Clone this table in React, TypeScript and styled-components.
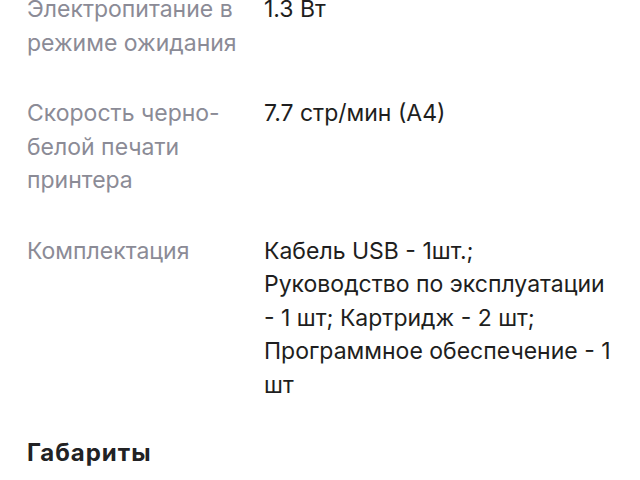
import React from "react";
import styled, { createGlobalStyle } from "styled-components";

const Global = createGlobalStyle`
  html, body { margin: 0; padding: 0; background: #ffffff; }
  body { font-family: Inter, "Noto Sans", "Liberation Sans", sans-serif; overflow: hidden; }
`;

const Page = styled.div`
  width: 640px;
  height: 480px;
  overflow: hidden;
  background: #ffffff;
`;

const Content = styled.div`
  display: flex;
  flex-direction: column;
  padding: 0 24px 0 27px;
  margin-top: -7px;
`;

const SpecList = styled.dl`
  display: flex;
  flex-direction: column;
  gap: 37px;
  margin: 0;
`;

const SpecRow = styled.div`
  display: grid;
  grid-template-columns: 215px 1fr;
  column-gap: 22px;
  font-size: 23px;
  line-height: 33.5px;
`;

const Label = styled.dt`
  margin: 0;
  color: #8b8b96;
`;

const Value = styled.dd`
  margin: 0;
  color: #1e1e20;
  white-space: pre-line;
`;

const SectionTitle = styled.h2`
  margin: 34px 0 0;
  font-size: 24px;
  line-height: 34px;
  letter-spacing: 1px;
  font-weight: 700;
  color: #222224;
`;

const specs: [string, string][] = [
  ["Электропитание в режиме ожидания", "1.3 Вт"],
  ["Скорость черно-белой печати принтера", "7.7 стр/мин (А4)"],
  [
    "Комплектация",
    "Кабель USB - 1шт.;\nРуководство по эксплуатации - 1 шт; Картридж - 2 шт; Программное обеспечение - 1 шт",
  ],
];

export default function App() {
  return (
    <Page>
      <Global />
      <Content>
        <SpecList>
          {specs.map(([k, v]) => (
            <SpecRow key={k}>
              <Label>{k}</Label>
              <Value>{v}</Value>
            </SpecRow>
          ))}
        </SpecList>
        <SectionTitle>Габариты</SectionTitle>
      </Content>
    </Page>
  );
}
